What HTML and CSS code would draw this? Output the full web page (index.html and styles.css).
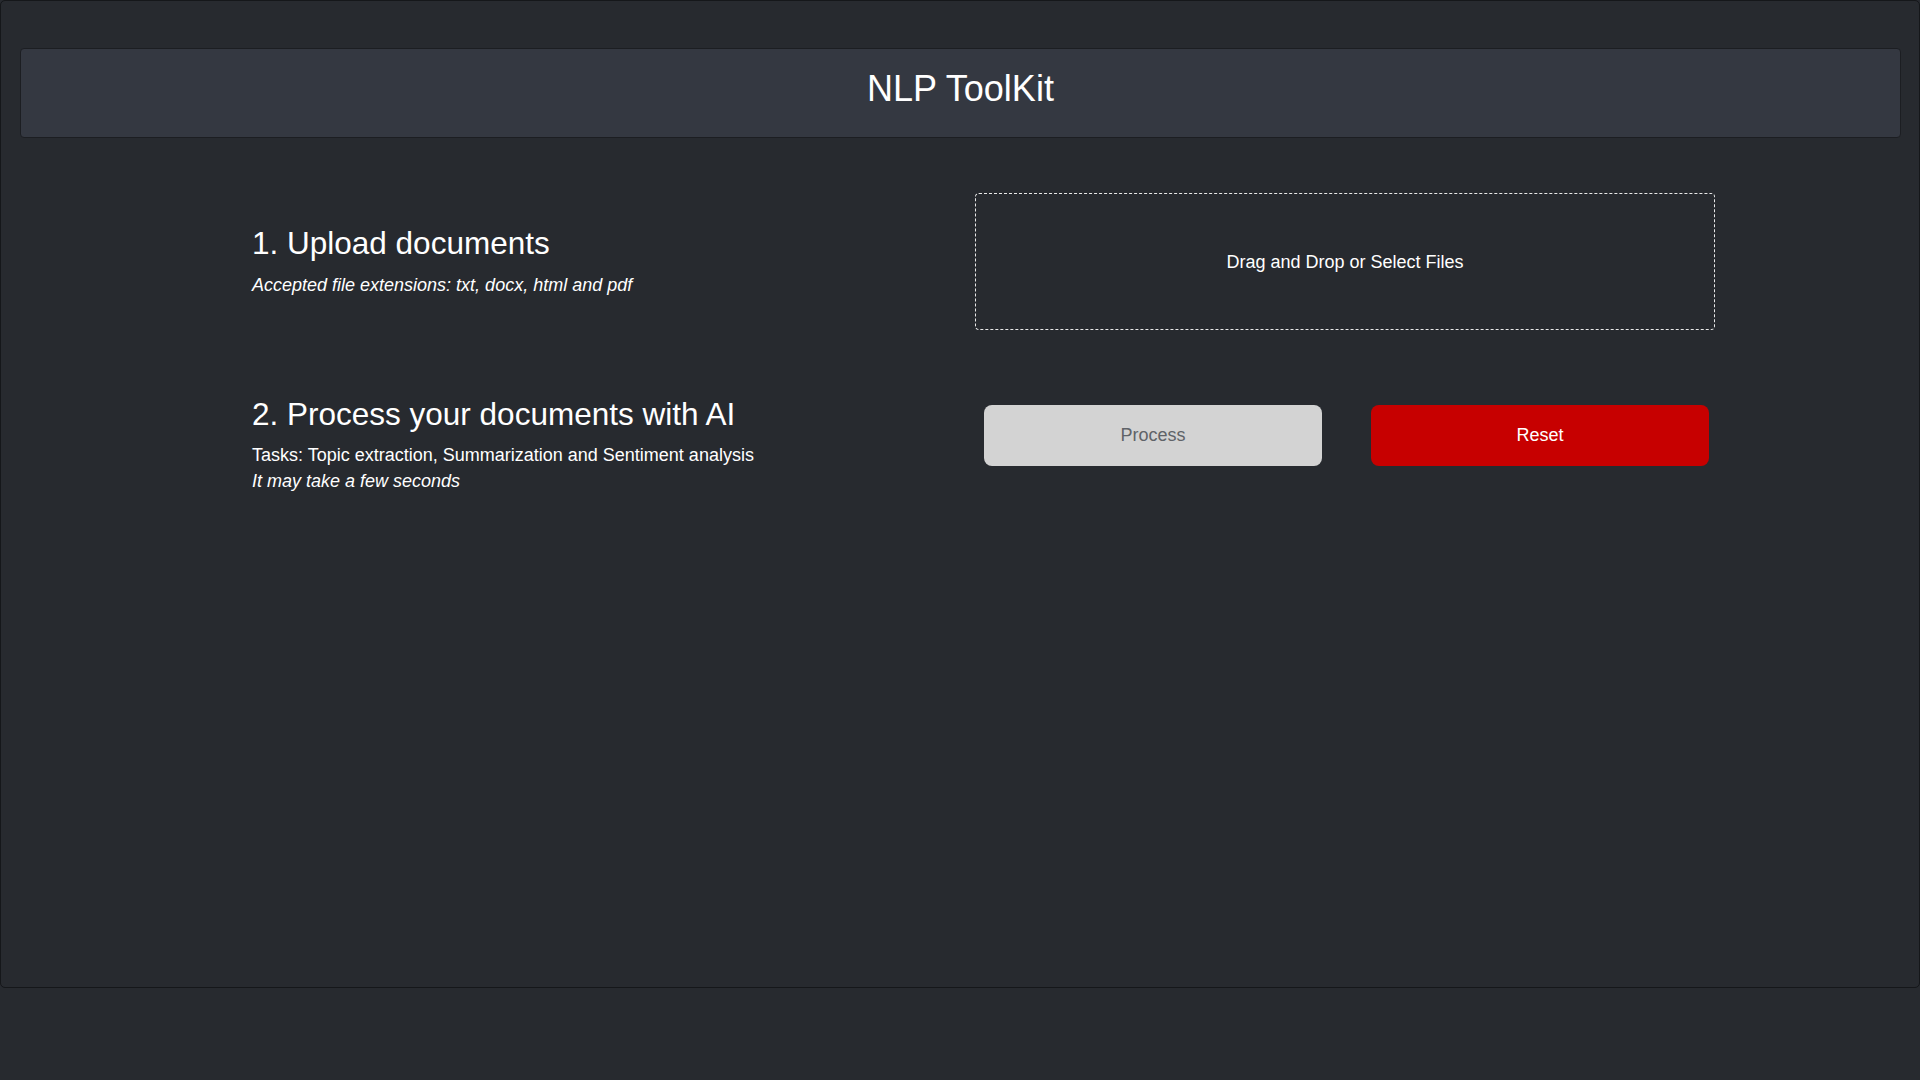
FILE: index.html
```html
<!DOCTYPE html>
<html lang="en">
<head>
<meta charset="utf-8">
<title>NLP ToolKit</title>
<link rel="stylesheet" href="styles.css">
</head>
<body>
<div class="app">
  <header class="header">
    <h1 class="title">NLP ToolKit</h1>
  </header>
  <main class="content">
    <section class="row row-upload">
      <div class="info info-upload">
        <h2 class="step-title">1. Upload documents</h2>
        <p class="note">Accepted file extensions: txt, docx, html and pdf</p>
      </div>
      <div class="dropzone">Drag and Drop or Select Files</div>
    </section>
    <section class="row row-process">
      <div class="info">
        <h2 class="step-title">2. Process your documents with AI</h2>
        <p class="tasks">Tasks: Topic extraction, Summarization and Sentiment analysis</p>
        <p class="tasks note-plain">It may take a few seconds</p>
      </div>
      <div class="actions">
        <button class="btn btn-process" type="button">Process</button>
        <button class="btn btn-reset" type="button">Reset</button>
      </div>
    </section>
  </main>
</div>
</body>
</html>
```
FILE: styles.css
```css
html, body {
  margin: 0;
  padding: 0;
  background: #272a2f;
}

body {
  font-family: "Liberation Sans", Arial, sans-serif;
  color: #ffffff;
}

.app {
  box-sizing: border-box;
  width: 100%;
  height: 988px;
  border: 1px solid #15171a;
  border-radius: 5px;
  background: #272a2f;
  padding: 47px 18px 0 19px;
}

.header {
  box-sizing: border-box;
  height: 90px;
  background: #343841;
  border: 1px solid #1c1e22;
  border-radius: 4px;
  padding-top: 19px;
}

.title {
  margin: 0;
  font-size: 36px;
  font-weight: normal;
  text-align: center;
  line-height: normal;
}

.content {
  padding-left: 232px;
}

.row {
  display: grid;
  grid-template-columns: 723px 740px;
  align-items: start;
}

.row-upload {
  margin-top: 55px;
}

.row-process {
  margin-top: 66px;
}

.info-upload {
  padding-top: 32px;
}

.step-title {
  margin: 0;
  font-size: 31.5px;
  font-weight: normal;
  line-height: normal;
}

.note {
  margin: 13px 0 0;
  font-size: 18px;
  font-style: italic;
  line-height: normal;
}

.tasks {
  margin: 0;
  font-size: 18px;
  line-height: 26px;
}

.tasks:first-of-type {
  margin-top: 9px;
}

.note-plain {
  font-style: italic;
}

.dropzone {
  box-sizing: border-box;
  height: 137px;
  border: 1px dashed #e8e8e8;
  border-radius: 4px;
  display: flex;
  align-items: center;
  justify-content: center;
  font-size: 18px;
  padding-top: 2px;
}

.actions {
  display: flex;
  gap: 49px;
  padding-left: 9px;
  margin-top: 9px;
}

.btn {
  box-sizing: border-box;
  width: 338px;
  height: 61px;
  border: none;
  border-radius: 8px;
  font-family: "Liberation Sans", Arial, sans-serif;
  font-size: 18px;
  padding: 0;
  cursor: pointer;
}

.btn-process {
  background: #d3d3d3;
  color: #5f6368;
}

.btn-reset {
  background: #c70000;
  color: #ffffff;
}
```
